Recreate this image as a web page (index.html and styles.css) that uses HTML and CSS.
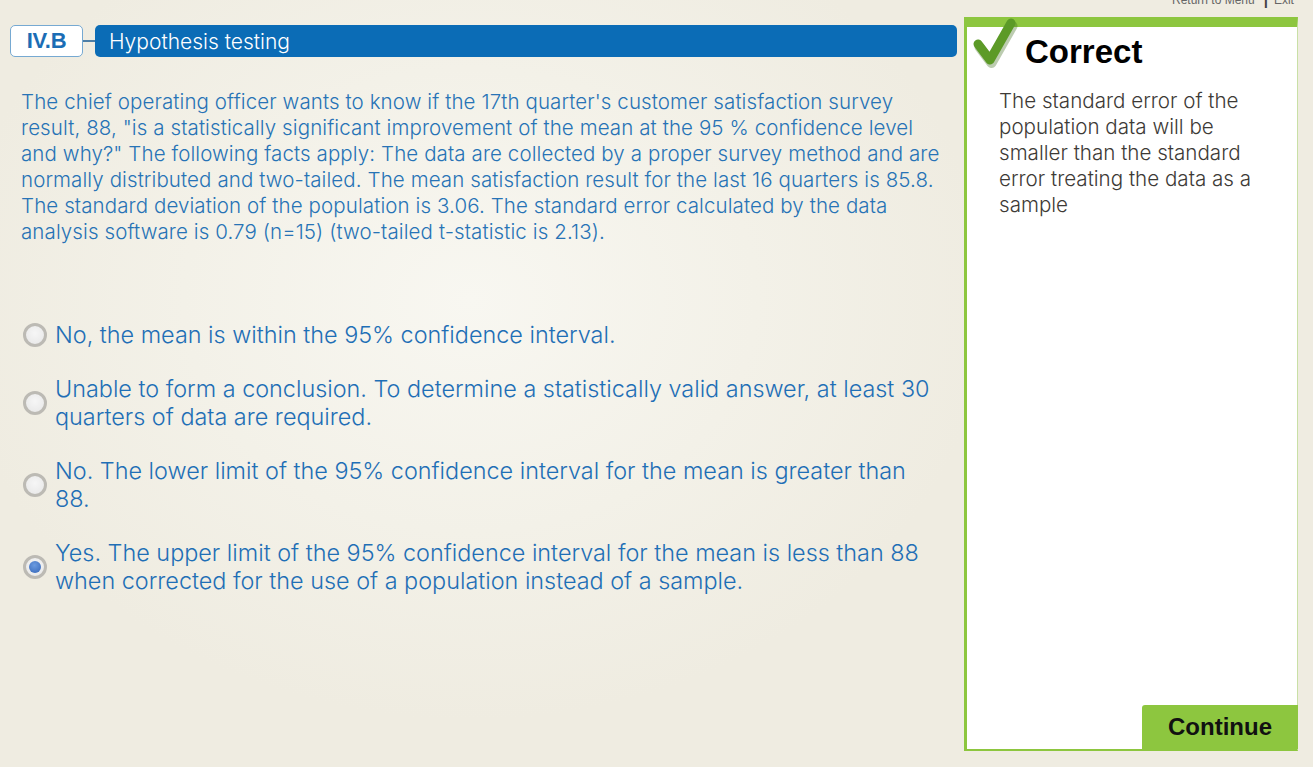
FILE: index.html
```html
<!DOCTYPE html>
<html lang="en">
<head>
<meta charset="utf-8">
<title>Hypothesis testing</title>
<link rel="stylesheet" href="styles.css">
</head>
<body>
<div class="topnav"><span>Return to Menu</span><span class="sep">|</span><span>Exit</span></div>
<div class="page">
  <main class="main">
    <div class="header">
      <div class="code">IV.B</div>
      <div class="connector"></div>
      <div class="title-bar">Hypothesis testing</div>
    </div>
    <p class="question">The chief operating officer wants to know if the 17th quarter's customer satisfaction survey<br>result, 88, "is a statistically significant improvement of the mean at the 95 % confidence level<br>and why?" The following facts apply: The data are collected by a proper survey method and are<br>normally distributed and two-tailed. The mean satisfaction result for the last 16 quarters is 85.8.<br>The standard deviation of the population is 3.06. The standard error calculated by the data<br>analysis software is 0.79 (n=15) (two-tailed t-statistic is 2.13).</p>
    <div class="options">
      <div class="option"><span class="radio"></span><span class="label">No, the mean is within the 95% confidence interval.</span></div>
      <div class="option"><span class="radio"></span><span class="label">Unable to form a conclusion. To determine a statistically valid answer, at least 30<br>quarters of data are required.</span></div>
      <div class="option"><span class="radio"></span><span class="label">No. The lower limit of the 95% confidence interval for the mean is greater than<br>88.</span></div>
      <div class="option"><span class="radio selected"></span><span class="label">Yes. The upper limit of the 95% confidence interval for the mean is less than 88<br>when corrected for the use of a population instead of a sample.</span></div>
    </div>
  </main>
  <aside class="panel">
    <svg class="check" width="50" height="55" viewBox="0 0 50 55">
      <path d="M8 30 L20 46 L41 9" fill="none" stroke="#3f6e1c" stroke-opacity="0.35" stroke-width="10" stroke-linecap="round" stroke-linejoin="round" transform="translate(1.5 2)"/>
      <path d="M8 29 L20 45 L41 8" fill="none" stroke="#5c9a27" stroke-width="9" stroke-linecap="round" stroke-linejoin="round"/>
    </svg>
    <h2 class="verdict">Correct</h2>
    <p class="feedback">The standard error of the<br>population data will be<br>smaller than the standard<br>error treating the data as a<br>sample</p>
    <button class="continue">Continue</button>
  </aside>
</div>
</body>
</html>
```

FILE: styles.css
```css
html, body {
  margin: 0;
  padding: 0;
}
body {
  width: 1313px;
  height: 767px;
  overflow: hidden;
  position: relative;
  font-family: Inter, "Liberation Sans", Arial, sans-serif;
  background: radial-gradient(ellipse 520px 420px at 470px 300px, #f8f7f1 0%, #f3f1e8 55%, #efece1 100%);
  background-color: #efece1;
}
.topnav {
  position: absolute;
  top: -7px;
  left: 1172px;
  font-family: "Liberation Sans", Arial, sans-serif;
  font-size: 12px;
  line-height: 14px;
  color: #666;
  display: flex;
  white-space: nowrap;
}
.topnav .sep {
  color: #444;
  font-weight: bold;
  font-size: 15px;
  margin: 0 6px 0 9px;
}
.page {
  display: flex;
  align-items: flex-start;
}
.main {
  width: 947px;
  padding: 25px 0 0 10px;
}
.header {
  display: flex;
  align-items: center;
  height: 32px;
}
.code {
  box-sizing: border-box;
  width: 73px;
  height: 32px;
  border: 1.5px solid #76a9d2;
  border-radius: 5px;
  background: #fff;
  color: #1b6db5;
  font-family: "Liberation Sans", Arial, sans-serif;
  font-weight: bold;
  font-size: 22px;
  letter-spacing: -0.3px;
  display: flex;
  align-items: center;
  justify-content: center;
}
.connector {
  width: 12px;
  height: 1.5px;
  background: #4d7ea6;
}
.title-bar {
  flex: 1;
  height: 32px;
  box-sizing: border-box;
  background: #0b6cb6;
  border-radius: 5px;
  color: #fff;
  font-size: 21px;
  font-weight: 350;
  padding-left: 14px;
  display: flex;
  align-items: center;
}
.question {
  margin: 32px 0 0 0;
  padding-left: 11px;
  font-size: 20.5px;
  letter-spacing: 0.1px;
  font-weight: 350;
  line-height: 26px;
  color: #2773b6;
  white-space: nowrap;
}
.options {
  margin-top: 76px;
  display: flex;
  flex-direction: column;
  gap: 25px;
}
.option {
  display: flex;
  align-items: center;
  padding-left: 13px;
  gap: 8px;
}
.radio {
  flex: none;
  box-sizing: border-box;
  width: 24px;
  height: 24px;
  border-radius: 50%;
  border: 3px solid #bcbab4;
  background: radial-gradient(circle at 50% 40%, #f6f6f6 0%, #e6e6e6 100%);
  display: flex;
  align-items: center;
  justify-content: center;
}
.radio.selected::after {
  content: "";
  width: 12px;
  height: 12px;
  border-radius: 50%;
  background: radial-gradient(circle at 45% 35%, #6b9be0 0%, #3566b8 100%);
}
.label {
  font-size: 23.4px;
  font-weight: 350;
  line-height: 28.5px;
  color: #1f6fb6;
  white-space: nowrap;
}
.panel {
  position: relative;
  box-sizing: border-box;
  margin: 17px 0 0 7px;
  width: 334px;
  height: 734px;
  background: #fff;
  border-top: 10px solid #8dc63f;
  border-left: 3px solid #8dc63f;
  border-right: 1px solid #c9e0a6;
  border-bottom: 2px solid #8dc63f;
  display: flex;
  flex-direction: column;
}
.check {
  position: absolute;
  left: 3px;
  top: -12px;
}
.verdict {
  margin: 5px 0 0 58px;
  font-family: "Liberation Sans", Arial, sans-serif;
  font-size: 33px;
  line-height: 40px;
  font-weight: bold;
  color: #000;
}
.feedback {
  margin: 16px 0 0 32px;
  font-size: 20.6px;
  font-weight: 350;
  line-height: 26px;
  color: #3d3a36;
}
.continue {
  margin-top: auto;
  align-self: flex-end;
  margin-right: -1px;
  width: 156px;
  height: 44px;
  border: none;
  border-radius: 3px 0 0 0;
  background: #8dc63f;
  color: #111;
  font-family: "Liberation Sans", Arial, sans-serif;
  font-weight: bold;
  font-size: 24px;
  padding: 0;
}
```
